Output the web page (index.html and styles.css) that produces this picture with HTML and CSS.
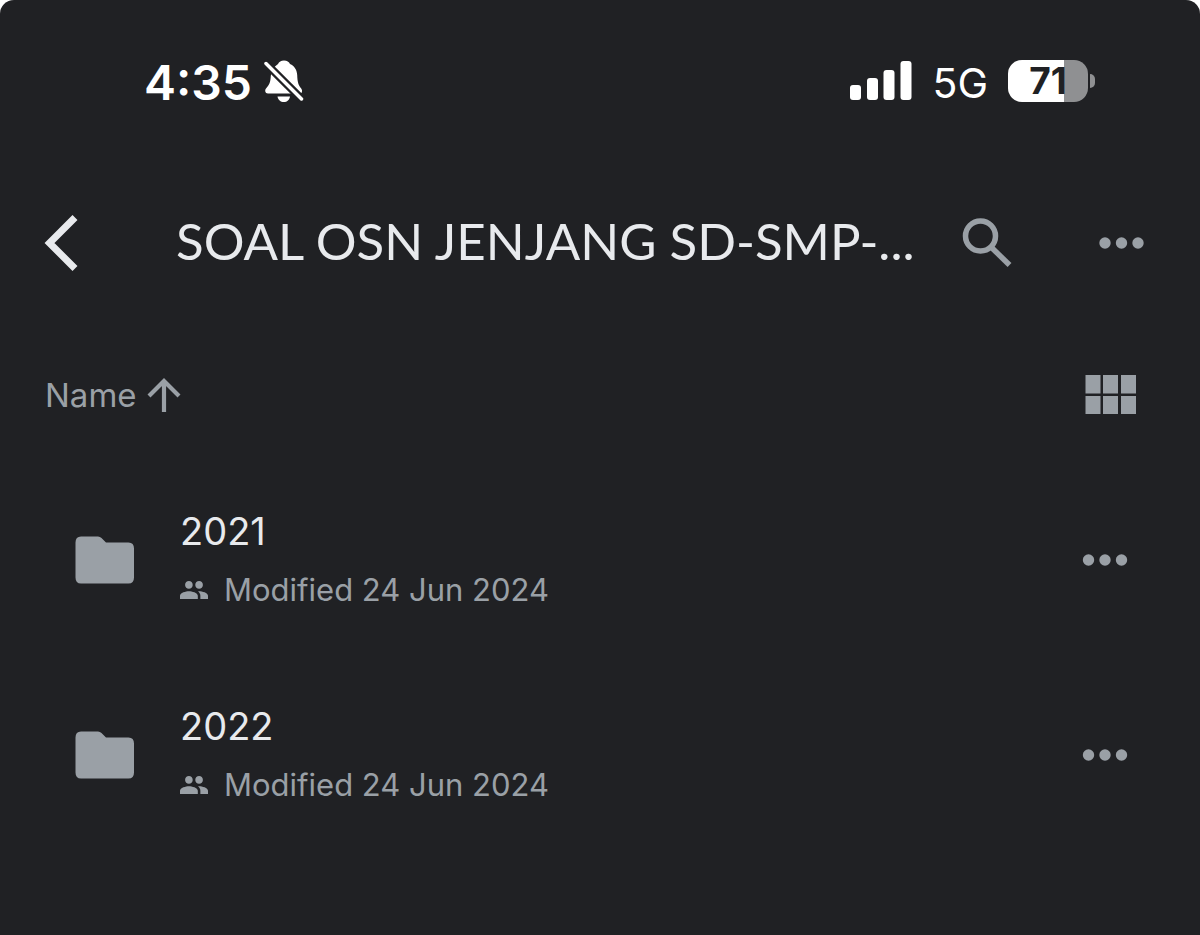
FILE: index.html
```html
<!DOCTYPE html>
<html lang="en">
<head>
<meta charset="utf-8">
<meta name="viewport" content="width=device-width, initial-scale=1">
<title>SOAL OSN JENJANG SD-SMP-...</title>
<link rel="stylesheet" href="styles.css">
</head>
<body>
<div class="screen">
  <div class="status">
    <div class="status-left">
      <span class="time">4:35</span>
      <svg class="bell" viewBox="0 0 40 44" width="40" height="44" aria-label="Silent mode">
        <path d="M20 1.500c3 0 5 1.500 6 3.500 4.500 2 7 6 7.200 11 .2 7 1.300 10.500 4 13.500 1.300 1.500 1.300 5-1.200 5H4c-3 0-3.500-3.500-1.800-5.200C5.300 26 6.500 23 6.800 17 7 12 9.500 8 14 5c1-2 3-3.500 6-3.500z" fill="#fff"/>
        <path d="M13.500 37.500h12.500c-.5 3.500-3 5.500-6.200 5.500s-5.800-2-6.300-5.500z" fill="#fff"/>
        <path d="M0 2.500L38.500 41" stroke="#202124" stroke-width="8"/>
        <path d="M2 4.500L37.500 40" stroke="#fff" stroke-width="3.500" stroke-linecap="round"/>
      </svg>
    </div>
    <div class="status-right">
      <svg class="signal" viewBox="0 0 62 40" width="62" height="40" fill="#fff" aria-label="Signal">
        <rect x="0" y="24" width="11" height="15" rx="3"/><rect x="17" y="17" width="11" height="22" rx="3"/><rect x="33.500" y="9" width="11" height="30" rx="3"/><rect x="50.500" y="0" width="11" height="39" rx="3"/>
      </svg>
      <span class="network">5G</span>
      <div class="battery"><span class="battery-body">71</span><span class="battery-cap"></span></div>
    </div>
  </div>

  <header class="appbar">
    <button class="icon-button back" aria-label="Back">
      <svg viewBox="0 0 34 56" width="34" height="56" fill="none" stroke="#e8eaed" stroke-width="7"><path d="M31 2.500L5.500 28 31 53.500"/></svg>
    </button>
    <h1 class="title">SOAL OSN JENJANG SD-SMP-...</h1>
    <button class="icon-button search" aria-label="Search">
      <svg viewBox="0 0 50 50" width="50" height="50" fill="none" stroke="#9aa0a6" stroke-width="5.500"><circle cx="18.500" cy="18" r="15"/><path d="M28.500 28.500L47.500 47"/></svg>
    </button>
    <button class="icon-button" aria-label="More options">
      <svg viewBox="0 0 46 12" width="46" height="12" fill="#9aa0a6"><circle cx="6" cy="6" r="5.700"/><circle cx="22.500" cy="6" r="5.700"/><circle cx="39" cy="6" r="5.700"/></svg>
    </button>
  </header>

  <div class="sortbar">
    <button class="icon-button sort">Name
      <svg viewBox="0 0 34 36" width="34" height="36" fill="none" stroke="#9aa0a6" stroke-width="4.200"><path d="M17 35V4M2 19L17 4l15 15"/></svg>
    </button>
    <button class="icon-button" aria-label="Grid view">
      <svg viewBox="0 0 52 40" width="52" height="40" fill="#9aa0a6"><path d="M.5 0h15v18.500H.5zM18 0h15v18.500H18zM36 0h15v18.500H36zM.5 21h15v18H.5zM18 21h15v18H18zM36 21h15v18H36z"/></svg>
    </button>
  </div>

  <main class="files">
    <div class="file">
      <svg class="folder" viewBox="0 0 60 48" width="60" height="48" fill="#9aa0a6"><path d="M6 .5h17q2 0 3.500 1.500L31 6.500h22.500q5.500 0 5.500 6V41.500q0 6-5.500 6H6q-5.500 0-5.500-6v-35q0-6 5.500-6z"/></svg>
      <div class="info">
        <h2 class="name">2021</h2>
        <p class="meta">
          <svg viewBox="1 5 22 14" width="28" height="18" fill="#9aa0a6" aria-label="Shared"><path d="M16 11c1.660 0 2.990-1.340 2.990-3S17.660 5 16 5s-3 1.340-3 3 1.340 3 3 3zm-8 0c1.660 0 2.990-1.340 2.990-3S9.660 5 8 5 5 6.340 5 8s1.340 3 3 3zm0 2c-2.330 0-7 1.170-7 3.500V19h14v-2.500C15 14.170 10.330 13 8 13zm8 0c-.29 0-.62.02-.97.05 1.160.84 1.970 1.970 1.970 3.450V19h6v-2.500c0-2.330-4.670-3.500-7-3.500z"/></svg>
          <span>Modified 24 Jun 2024</span>
        </p>
      </div>
      <button class="icon-button" aria-label="More options for 2021">
        <svg viewBox="0 0 46 12" width="46" height="12" fill="#9aa0a6"><circle cx="6.500" cy="6" r="5.700"/><circle cx="23" cy="6" r="5.700"/><circle cx="39.500" cy="6" r="5.700"/></svg>
      </button>
    </div>
    <div class="file">
      <svg class="folder" viewBox="0 0 60 48" width="60" height="48" fill="#9aa0a6"><path d="M6 .5h17q2 0 3.500 1.500L31 6.500h22.500q5.500 0 5.500 6V41.500q0 6-5.500 6H6q-5.500 0-5.500-6v-35q0-6 5.500-6z"/></svg>
      <div class="info">
        <h2 class="name">2022</h2>
        <p class="meta">
          <svg viewBox="1 5 22 14" width="28" height="18" fill="#9aa0a6" aria-label="Shared"><path d="M16 11c1.660 0 2.990-1.340 2.990-3S17.660 5 16 5s-3 1.340-3 3 1.340 3 3 3zm-8 0c1.660 0 2.990-1.340 2.990-3S9.660 5 8 5 5 6.340 5 8s1.340 3 3 3zm0 2c-2.330 0-7 1.170-7 3.500V19h14v-2.500C15 14.170 10.330 13 8 13zm8 0c-.29 0-.62.02-.97.05 1.160.84 1.970 1.970 1.970 3.450V19h6v-2.500c0-2.330-4.670-3.500-7-3.500z"/></svg>
          <span>Modified 24 Jun 2024</span>
        </p>
      </div>
      <button class="icon-button" aria-label="More options for 2022">
        <svg viewBox="0 0 46 12" width="46" height="12" fill="#9aa0a6"><circle cx="6.500" cy="6" r="5.700"/><circle cx="23" cy="6" r="5.700"/><circle cx="39.500" cy="6" r="5.700"/></svg>
      </button>
    </div>
  </main>
</div>
</body>
</html>
```
FILE: styles.css
```css
* { box-sizing: border-box; }
html { background: #fff; }
body { margin: 0; font-family: Inter, "Liberation Sans", sans-serif; }
svg { display: block; flex: none; }
h1, h2, p { margin: 0; font-weight: 400; }
.screen { min-height: 100vh; background: #202124; border-radius: 14px 14px 0 0; color: #e8eaed; }
.icon-button { display: flex; align-items: center; flex: none; padding: 0; border: 0; background: none; color: inherit; font: inherit; cursor: pointer; }

.status { display: flex; align-items: center; justify-content: space-between; height: 162px; padding: 0 105px 0 144px; color: #fff; }
.status-left, .status-right { display: flex; align-items: center; }
.status-left { gap: 12px; }
.time { padding-top: 4px; font-size: 48px; font-weight: 600; line-height: 60px; }
.network { margin: 4px 20px 0; font-size: 41px; line-height: 48px; }
.battery { display: flex; align-items: center; gap: 2px; }
.battery-body { width: 80px; height: 42px; border-radius: 14px; background: linear-gradient(90deg, #fff 56px, #8f9092 56px); color: #202124; font-size: 37px; font-weight: 700; line-height: 42px; text-align: center; }
.battery-cap { width: 5px; height: 14px; border-radius: 0 6px 6px 0; background: #8f9092; }

.appbar { display: flex; align-items: center; height: 162px; padding: 0 55px 0 44px; }
.title { flex: 1; min-width: 0; margin-left: 98px; padding-bottom: 4px; overflow: hidden; font-family: Lato, sans-serif; font-size: 51px; line-height: 64px; white-space: nowrap; }
.search { margin-right: 87px; }

.sortbar { display: flex; align-items: center; justify-content: space-between; height: 138px; padding: 4px 63px 0 45px; color: #9aa0a6; }
.sort { gap: 10px; font-size: 33px; line-height: 40px; }

.file { display: flex; align-items: center; height: 195px; padding: 0 72px 0 75px; }
.info { flex: 1; margin-left: 45px; }
.name { font-size: 38px; line-height: 60px; }
.meta { display: flex; align-items: center; gap: 16px; color: #9aa0a6; font-size: 31px; line-height: 58px; }
```
